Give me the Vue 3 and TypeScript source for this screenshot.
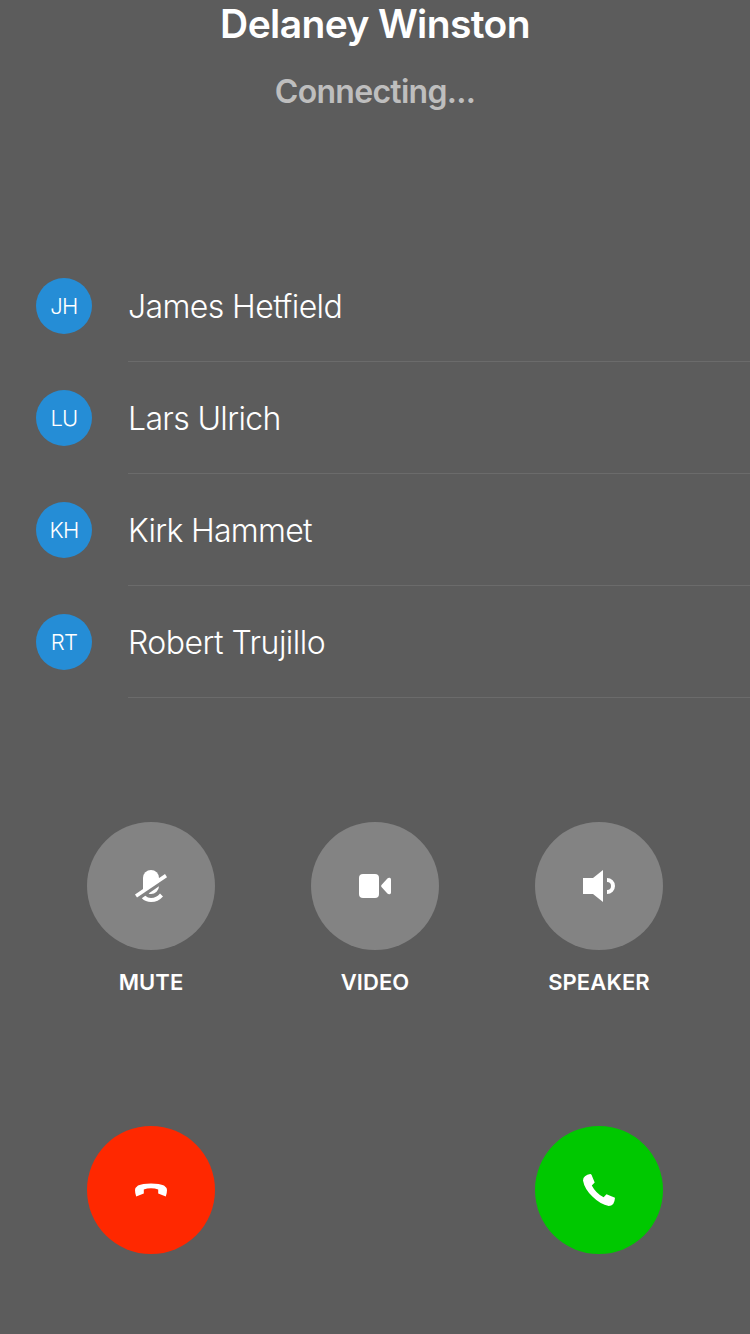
<script setup lang="ts">
interface Contact {
  initials: string
  name: string
  kind: string
}

const contacts: Contact[] = [
  { initials: 'JH', name: 'James Hetfield', kind: 'james' },
  { initials: 'LU', name: 'Lars Ulrich', kind: 'lars' },
  { initials: 'KH', name: 'Kirk Hammet', kind: 'kirk' },
  { initials: 'RT', name: 'Robert Trujillo', kind: 'robert' },
]

const controls = [
  {
    label: 'MUTE',
    paths: [
      'M8 20V8a8 8 0 0 1 16 0v2L8 21Z',
      'M30 4 32 7.2 2 27.6 0 24.4Z',
      'M24 16.3A8 8 0 0 1 16 24Q14.8 24 13.6 23.4Z',
      'M10.3 25.8Q12.8 28 16 28 21.5 28 25 23.6L28 26.5Q23.2 32 16 32 10.6 32 6.8 28.2Z',
    ],
  },
  {
    label: 'VIDEO',
    paths: [
      'M4 4H16a4 4 0 0 1 4 4V24a4 4 0 0 1-4 4H4a4 4 0 0 1-4-4V8a4 4 0 0 1 4-4Z',
      'M22.5 15 28.4 8.6Q29.3 7.6 30.6 7.8 32 8 32 9.5V22.5Q32 24 30.6 24.2 29.3 24.4 28.4 23.4L22.5 17Q21.6 16 22.5 15Z',
    ],
  },
  {
    label: 'SPEAKER',
    paths: ['M0 8H10L20 0V32L10 24H0Z', 'M24 8a8 8 0 0 1 0 16V20a4 4 0 0 0 0-8Z'],
  },
]
</script>

<template>
  <main class="call">
    <header class="heading">
      <h1>Delaney Winston</h1>
      <p>Connecting...</p>
    </header>

    <ul class="contacts">
      <li v-for="c in contacts" :key="c.initials">
        <span class="avatar">{{ c.initials }}</span>
        <span class="name"><span :class="c.kind">{{ c.name }}</span></span>
      </li>
    </ul>

    <section class="controls">
      <div v-for="c in controls" :key="c.label" class="control">
        <button class="round" :aria-label="c.label">
          <svg viewBox="0 0 32 32"><path v-for="d in c.paths" :key="d" :d="d" /></svg>
        </button>
        <span class="label">{{ c.label }}</span>
      </div>
    </section>

    <footer class="actions">
      <button class="round decline" aria-label="Decline">
        <svg viewBox="0 0 32 32">
          <path d="M0 16Q.2 13.6 3 11.6 7.4 9.4 16 9.4T29 11.6Q31.8 13.6 32 16 32 19.5 30.8 22.4L23.2 19.5V15.5Q20 14.2 16 14.2T8.8 15.5V19.5L1.2 22.4Q0 19.5 0 16Z" />
        </svg>
      </button>
      <button class="round accept" aria-label="Accept">
        <svg viewBox="0 0 32 32">
          <path d="M7.2 0Q8.2 0 8.6 1L11.7 8.5 8.8 11.4Q12.8 19.2 20.6 23.2L23.5 20.3 32 23.8Q31.8 27.6 30.2 30 28.4 32 25.8 32 17.4 30.6 9.4 22.6T0 6.4Q0 3.8 2 2.2 4.2 .4 7.2 0Z" />
        </svg>
      </button>
    </footer>
  </main>
</template>

<style>
body {
  background: #5c5c5c;
}
</style>

<style scoped>
.call {
  box-sizing: border-box;
  width: 750px;
  height: 1334px;
  display: flex;
  flex-direction: column;
  overflow: hidden;
  background: #5c5c5c;
  color: #fff;
  font-family: Inter, 'Liberation Sans', sans-serif;
}
.heading {
  height: 250px;
  text-align: center;
}
h1 {
  margin: 0;
  font-size: 39px;
  line-height: 48px;
  font-weight: 600;
  letter-spacing: -0.62px;
}
p {
  margin: 24px 0 0;
  font-size: 32px;
  line-height: 40px;
  font-weight: 600;
  letter-spacing: -0.72px;
  color: #bebebe;
}
.contacts {
  margin: 0;
  padding: 0 0 0 36px;
  list-style: none;
}
li {
  height: 112px;
  display: flex;
  align-items: center;
  gap: 36px;
}
.avatar {
  width: 56px;
  height: 56px;
  border-radius: 50%;
  background: #258dd6;
  font-size: 22px;
  font-weight: 300;
  line-height: 57px;
  letter-spacing: -0.7px;
  text-align: center;
}
.name {
  flex: 1;
  box-sizing: border-box;
  height: 112px;
  border-bottom: 1px solid #6b6b6b;
  font-size: 32px;
  font-weight: 300;
  line-height: 114px;
}
.james {
  letter-spacing: -0.6px;
}
.lars {
  letter-spacing: -0.64px;
}
.kirk {
  letter-spacing: -0.7px;
}
.robert {
  letter-spacing: -0.52px;
}
.controls {
  display: grid;
  grid-template-columns: repeat(3, 224px);
  justify-content: center;
  margin-top: 124px;
}
.control {
  display: flex;
  flex-direction: column;
  align-items: center;
}
.round {
  width: 128px;
  height: 128px;
  padding: 0;
  border: 0;
  border-radius: 50%;
  display: flex;
  align-items: center;
  justify-content: center;
  background: #838383;
}
.round svg {
  width: 32px;
  height: 32px;
  fill: #fff;
  overflow: visible;
}
.label {
  margin-top: 17px;
  font-size: 22px;
  line-height: 30px;
  font-weight: 600;
  letter-spacing: 0.1px;
}
.actions {
  display: flex;
  justify-content: space-between;
  margin-top: 129px;
  padding: 0 87px;
}
.decline {
  background: #ff2800;
}
.accept {
  background: #00c800;
}
</style>
